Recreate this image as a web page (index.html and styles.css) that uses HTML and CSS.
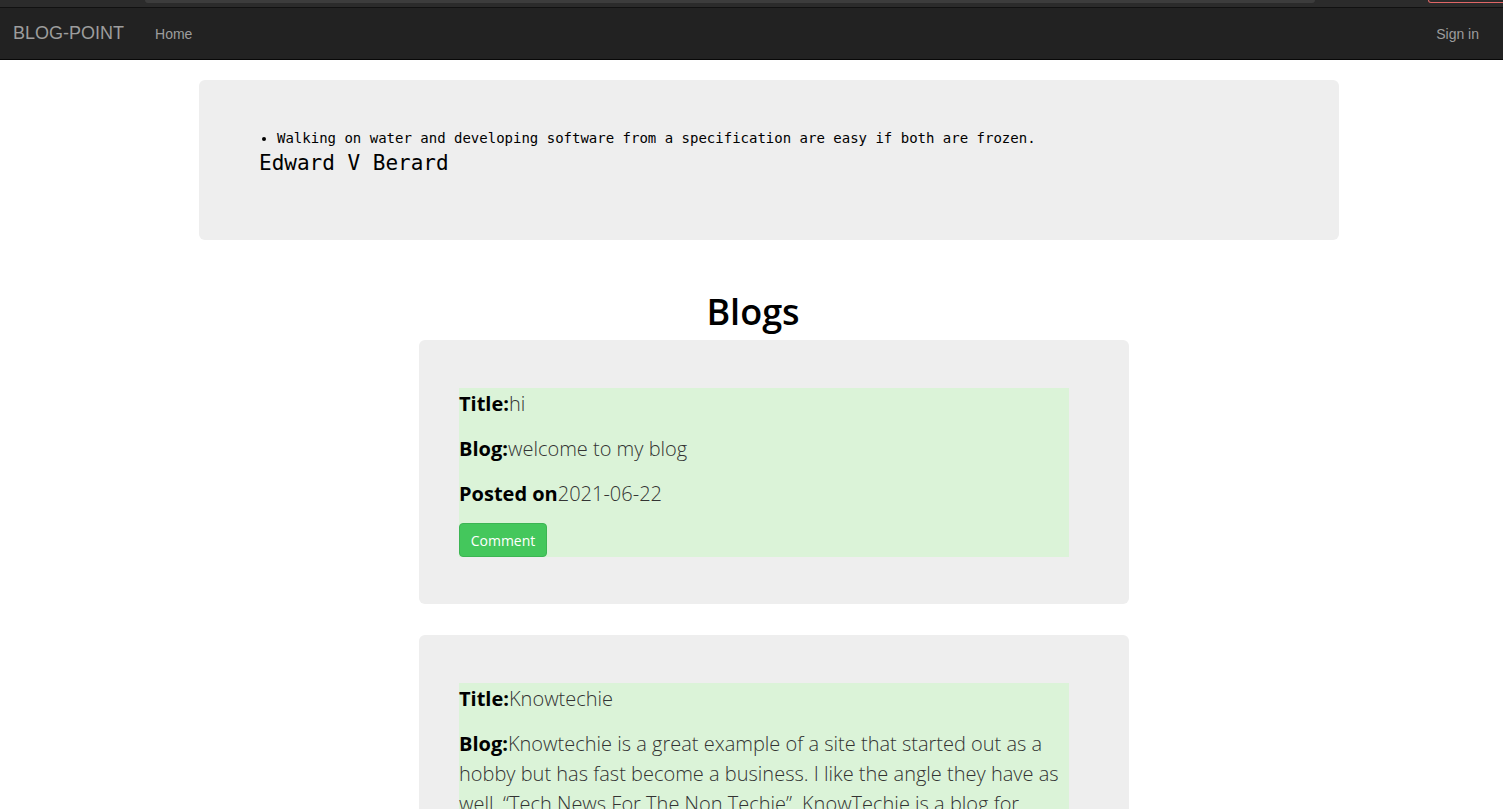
FILE: index.html
```html
<!DOCTYPE html>
<html lang="en">
<head>
<meta charset="utf-8">
<title>BLOG-POINT</title>
<link rel="stylesheet" href="styles.css">
</head>
<body>
<div class="chrome">
  <div class="chrome-tab"></div>
  <div class="chrome-pill"></div>
</div>
<nav class="navbar">
  <a class="brand" href="#">BLOG-POINT</a>
  <a class="nav-link" href="#">Home</a>
  <a class="nav-link nav-right" href="#">Sign in</a>
</nav>
<div class="jumbotron">
  <ul class="quote">
    <li>Walking on water and developing software from a specification are easy if both are frozen.</li>
  </ul>
  <div class="author">Edward V Berard</div>
</div>
<h1 class="heading">Blogs</h1>
<div class="card">
  <div class="post">
    <p><b>Title:</b>hi</p>
    <p><b>Blog:</b>welcome to my blog</p>
    <p><b>Posted on</b>2021-06-22</p>
    <button class="btn">Comment</button>
  </div>
</div>
<div class="card">
  <div class="post">
    <p><b>Title:</b>Knowtechie</p>
    <p><b>Blog:</b>Knowtechie is a great example of a site that started out as a hobby but has fast become a business. I like the angle they have as well, “Tech News For The Non Techie”. KnowTechie is a blog for people who want to stay informed about technology without the jargon.</p>
    <p><b>Posted on</b>2021-06-22</p>
    <button class="btn">Comment</button>
  </div>
</div>
</body>
</html>
```
FILE: styles.css
```css
* { box-sizing: border-box; }
body {
  margin: 0;
  background: #fff;
  font-family: "Open Sans", sans-serif;
}
.chrome {
  height: 8px;
  background: #2b2b2b;
  border-bottom: 1px solid #111;
  display: flex;
  align-items: flex-start;
}
.chrome-tab {
  margin-left: 145px;
  width: 1170px;
  height: 3px;
  background: #3c3c3c;
  border-radius: 0 0 8px 8px;
}
.chrome-pill {
  margin-left: auto;
  margin-right: -10px;
  width: 85px;
  height: 3px;
  border: 1px solid #e06666;
  border-top: none;
  border-radius: 0 0 8px 8px;
}
.navbar {
  height: 52px;
  background: #222;
  border-bottom: 1px solid #080808;
  display: flex;
  align-items: center;
  font-family: "Liberation Sans", Arial, sans-serif;
}
.navbar a { text-decoration: none; color: #9d9d9d; }
.brand {
  font-size: 18px;
  margin-left: 13px;
}
.nav-link {
  font-size: 14px;
  margin-left: 31px;
  padding-top: 1px;
}
.nav-right {
  margin-left: auto;
  margin-right: 24px;
}
.jumbotron {
  margin: 20px 0 0 199px;
  width: 1140px;
  height: 160px;
  padding: 48px 60px;
  background: #eee;
  border-radius: 6px;
  font-family: "DejaVu Sans Mono", monospace;
}
.quote {
  margin: 0;
  padding-left: 18px;
  font-size: 14px;
  line-height: 20px;
}
.author {
  font-size: 21px;
  line-height: 30px;
}
.heading {
  margin: 52px 0 8px;
  padding-left: 3px;
  text-align: center;
  font-size: 36px;
  line-height: 40px;
  font-weight: 600;
  color: #000;
}
.card {
  margin: 0 0 31px 419px;
  width: 710px;
  padding: 48px 60px 47px 40px;
  background: #eee;
  border-radius: 6px;
}
.post {
  background: #dbf3d8;
}
.post p {
  margin: 0 0 15px;
  font-size: 20px;
  line-height: 30px;
  font-weight: 300;
  color: #333;
  padding-top: 1px;
  margin-bottom: 14px;
}
.post b {
  font-weight: 700;
  color: #000;
}
.btn {
  display: block;
  height: 34px;
  width: 88px;
  padding: 0;
  background: #44c75c;
  border: 1px solid #3cb553;
  border-radius: 4px;
  color: #fff;
  font-family: "Open Sans", sans-serif;
  font-size: 14px;
}
```
